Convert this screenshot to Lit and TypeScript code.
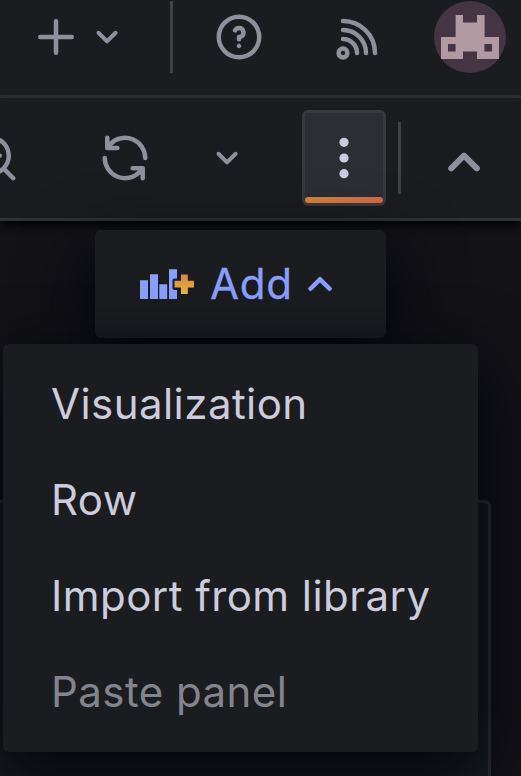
import { LitElement, html, css, svg } from "lit";
import { customElement } from "lit/decorators.js";

const PATHS = {
  plus: "M19,11H13V5a1,1,0,0,0-2,0v6H5a1,1,0,0,0,0,2h6v6a1,1,0,0,0,2,0V13h6a1,1,0,0,0,0-2Z",
  down: "M17,9.17a1,1,0,0,0-1.41,0L12,12.71,8.46,9.17a1,1,0,0,0-1.41,0,1,1,0,0,0,0,1.42l4.24,4.24a1,1,0,0,0,1.42,0L17,10.59A1,1,0,0,0,17,9.17Z",
  up: "M17,13.41,12.71,9.17a1,1,0,0,0-1.42,0L7.05,13.41a1,1,0,0,0,0,1.42,1,1,0,0,0,1.41,0L12,11.29l3.54,3.54a1,1,0,0,0,.7.29,1,1,0,0,0,.71-.29A1,1,0,0,0,17,13.41Z",
  help: "M11.29,15.29a1.58,1.58,0,0,0-.12.15.76.76,0,0,0-.09.18.64.64,0,0,0-.06.18,1.36,1.36,0,0,0,0,.2.84.84,0,0,0,.08.38.9.9,0,0,0,.54.54.94.94,0,0,0,.76,0,.9.9,0,0,0,.54-.54A1,1,0,0,0,13,16a1,1,0,0,0-.29-.71A1,1,0,0,0,11.29,15.29ZM12,2A10,10,0,1,0,22,12,10,10,0,0,0,12,2Zm0,18a8,8,0,1,1,8-8A8,8,0,0,1,12,20ZM12,7A3,3,0,0,0,9.4,8.5a1,1,0,1,0,1.73,1A1,1,0,0,1,12,9a1,1,0,0,1,0,2,1,1,0,0,0-1,1v1a1,1,0,0,0,2,0v-.18A3,3,0,0,0,12,7Z",
  sync: "M19.91,15.51H15.38a1,1,0,0,0,0,2h2.4A8,8,0,0,1,4,12a1,1,0,0,0-2,0,10,10,0,0,0,16.88,7.23V21a1,1,0,0,0,2,0V16.5A1,1,0,0,0,19.91,15.51ZM12,2A10,10,0,0,0,5.12,4.77V3a1,1,0,0,0-2,0V7.5a1,1,0,0,0,1,1h4.5a1,1,0,0,0,0-2H6.22A8,8,0,0,1,20,12a1,1,0,0,0,2,0A10,10,0,0,0,12,2Z",
  zoomOut: "M21.71,20.29,18,16.61A9,9,0,1,0,16.61,18l3.68,3.68a1,1,0,0,0,1.42,0A1,1,0,0,0,21.71,20.29ZM11,18a7,7,0,1,1,7-7A7,7,0,0,1,11,18Zm4-8H7a1,1,0,0,0,0,2h8a1,1,0,0,0,0-2Z",
};

const icon = (name: keyof typeof PATHS, size: number, cls = "") => html`
  <svg class=${cls} width=${size} height=${size} viewBox="0 0 24 24" fill="currentColor" aria-hidden="true">
    ${svg`<path d=${PATHS[name]}></path>`}
  </svg>`;

const rss = html`
  <svg class="rss" width="42" height="42" viewBox="0 0 42 42" fill="none" stroke="currentColor" stroke-width="4.5" stroke-linecap="round" aria-hidden="true">
    <circle cx="7" cy="35" r="4.4" />
    <path d="M7 21a14 14 0 0 1 14 14M7 12a23 23 0 0 1 23 23M7 3a32 32 0 0 1 32 32" />
  </svg>`;

const avatar = html`
  <svg class="avatar" width="72" height="72" viewBox="0 0 72 72" aria-hidden="true">
    <circle cx="36" cy="36" r="36" fill="#453444" />
    <path fill="#b29aa3" fill-rule="evenodd"
      d="M21.6 14H29V21.6H43V14H50.6V36H65V58H43V50.4H29V58H7V36H21.6ZM14 43H21.6V50.4H14ZM50.4 43H58V50.4H50.4Z" />
  </svg>`;

const dots = html`
  <svg width="12" height="42" viewBox="0 0 12 42" fill="currentColor" aria-hidden="true">
    <circle cx="6" cy="5.3" r="4.6" /><circle cx="6" cy="21" r="4.6" /><circle cx="6" cy="36.7" r="4.6" />
  </svg>`;

const panelAdd = html`
  <svg class="panel-add" width="54" height="31" viewBox="0 0 54 31" aria-hidden="true">
    <defs>
      <linearGradient id="warm" x1="0" y1="0" x2="0" y2="1">
        <stop offset="0" stop-color="#d9814c" /><stop offset="1" stop-color="#e6bd38" />
      </linearGradient>
    </defs>
    <path fill="#8a9ffb" d="M0 11.2h8V30H0ZM10 5.3h8V30h-8ZM19.3 15.3h7.9V30h-7.9ZM29 .3h8V9.5h-2.5a2 2 0 0 0-2 2v7.5a2 2 0 0 0 2 2H37V30h-8Z" />
    <path fill="url(#warm)" d="M41 5.5h6.8v6.3H54v6.8h-6.2v6.4H41v-6.4h-6.5v-6.8H41Z" />
  </svg>`;

@customElement("app-root")
export class AppRoot extends LitElement {
  static styles = css`
    :host {
      display: block;
      position: relative;
      width: 521px;
      height: 776px;
      overflow: hidden;
      background: #121217;
      color: #ccccdc;
      font: 400 42px/66px Inter, sans-serif;
      letter-spacing: 0.45px;
    }
    * { box-sizing: border-box; }
    svg { display: block; flex: none; }
    .bar {
      display: flex;
      align-items: center;
      background: #1b1c20;
      color: #918f9b;
      border-bottom: 3px solid #303135;
    }
    .top { height: 98px; padding: 0 15px 21px 29px; }
    .tools { height: 123px; padding-right: 21px; box-shadow: 0 4px 9px -1px #000; }
    .rule { flex: none; width: 3px; height: 72px; background: #404045; }
    .top .rule { margin-left: 39px; }
    .help { margin-left: 39px; }
    .rss { margin: 3px 0 0 70px; }
    .avatar { margin-left: 56px; }
    .zoom { margin: -1px 0 0 -34px; }
    .sync { margin-left: 78px; }
    .tools .down { margin-left: 51px; }
    .more {
      display: flex;
      position: relative;
      align-items: center;
      justify-content: center;
      flex: none;
      width: 84px;
      height: 96px;
      margin: 0 12px 0 51px;
      color: #ccccdc;
      background: #2d2e33;
      border: 3px solid #39393f;
      border-radius: 6px;
    }
    .more::after {
      content: "";
      position: absolute;
      left: 0;
      right: 0;
      bottom: 0;
      height: 6px;
      border-radius: 3px;
      background: linear-gradient(90deg, #d9883f, #d36a47);
    }
    .collapse { margin: 8px 0 0 27px; }
    .canvas { padding-top: 9px; }
    .add {
      display: flex;
      position: relative;
      align-items: center;
      width: 291px;
      height: 108px;
      margin-left: 95px;
      padding-left: 45px;
      border-radius: 6px;
      background: #1b1c20;
      box-shadow: 0 24px 72px rgb(1, 4, 9);
      color: #8a9ffb;
    }
    .add span { width: 81px; margin-left: 16px; letter-spacing: 0.8px; -webkit-text-stroke: 0.3px #8a9ffb; }
    .add .up { margin-left: 2px; }
    .panel {
      width: 511px;
      height: 320px;
      margin: 162px 0 0 -20px;
      border: 3px solid #2c2d32;
      border-radius: 6px;
      background: #181a1e;
    }
    .menu {
      position: absolute;
      left: 3px;
      top: 344px;
      width: 475px;
      height: 408px;
      padding: 12px 0;
      border-radius: 6px;
      background: #1b1c20;
      box-shadow: 0 24px 72px rgb(1, 4, 9);
    }
    .item { display: flex; align-items: center; height: 96px; padding-left: 48px; }
    .disabled { color: #84848f; }
  `;

  render() {
    return html`
      <header class="bar top">
        ${icon("plus", 54)} ${icon("down", 48, "down")}
        <i class="rule"></i>
        ${icon("help", 54, "help")} ${rss} ${avatar}
      </header>
      <nav class="bar tools">
        ${icon("zoomOut", 54, "zoom")} ${icon("sync", 54, "sync")} ${icon("down", 48, "down")}
        <div class="more">${dots}</div>
        <i class="rule"></i>
        ${icon("up", 72, "collapse")}
      </nav>
      <main class="canvas">
        <div class="add">${panelAdd}<span>Add</span>${icon("up", 54, "up")}</div>
        <div class="panel"></div>
      </main>
      <div class="menu">
        <div class="item">Visualization</div>
        <div class="item">Row</div>
        <div class="item">Import from library</div>
        <div class="item disabled">Paste panel</div>
      </div>
    `;
  }
}
